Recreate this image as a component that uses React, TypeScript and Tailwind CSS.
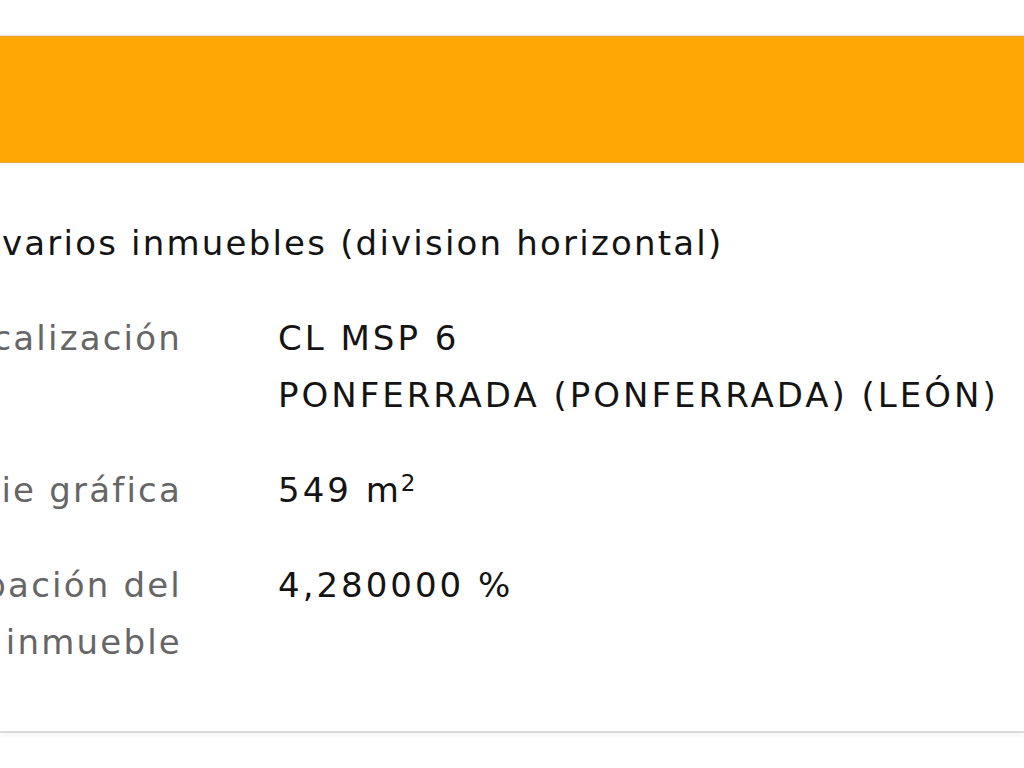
import React from "react";

const rows: { label: string; value: React.ReactNode }[] = [
  {
    label: "Localización",
    value: (
      <>
        CL MSP 6
        <br />
        PONFERRADA (PONFERRADA) (LEÓN)
      </>
    ),
  },
  {
    label: "Superficie gráfica",
    value: (
      <>
        549 m
        <sup className="text-[23px] relative top-[-11px] align-baseline ml-[-1px] tracking-normal">2</sup>
      </>
    ),
  },
  { label: "Participación del inmueble", value: "4,280000 %" },
];

export default function App() {
  return (
    <div
      className="w-[1024px] h-[768px] bg-white overflow-hidden text-[34px] leading-[57px]"
      style={{ fontFamily: '"DejaVu Sans", Verdana, sans-serif' }}
    >
      <div className="h-[36px] border-b border-[#ece4dc]" />
      <div className="h-[127px] bg-[#fea705] border-t border-[#e9a430] border-b border-b-[#e3a636]" />
      <div className="flex flex-col gap-[38px] pt-[52px] pb-[60px] border-b-2 border-[#dadada] shadow-[0_3px_4px_rgba(0,0,0,0.04)]">
        <div className="pl-[2px] text-[#141414] whitespace-nowrap tracking-[2.2px]">
          varios inmuebles (division horizontal)
        </div>
        {rows.map((r) => (
          <div key={r.label} className="flex">
            <div className="w-[500px] ml-[-318px] shrink-0 text-right text-[#666666] tracking-[2.2px]">
              {r.label}
            </div>
            <div className="ml-[96px] text-[#141414] whitespace-nowrap tracking-[3px]">{r.value}</div>
          </div>
        ))}
      </div>
    </div>
  );
}
